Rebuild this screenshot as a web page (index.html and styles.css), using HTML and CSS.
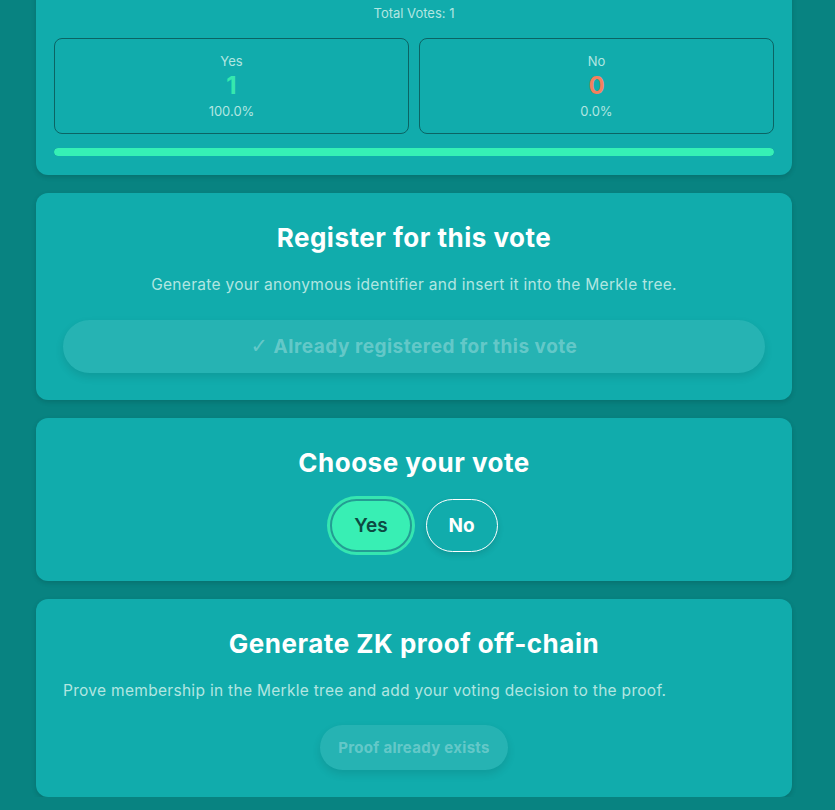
FILE: index.html
```html
<!DOCTYPE html>
<html lang="en">
<head>
<meta charset="utf-8">
<title>Vote</title>
<link rel="stylesheet" href="styles.css">
</head>
<body>
<main class="stack">
  <section class="card results">
    <p class="total">Total Votes: 1</p>
    <div class="stats">
      <div class="stat">
        <span class="stat-label">Yes</span>
        <span class="stat-num yes">1</span>
        <span class="stat-pct">100.0%</span>
      </div>
      <div class="stat">
        <span class="stat-label">No</span>
        <span class="stat-num no">0</span>
        <span class="stat-pct">0.0%</span>
      </div>
    </div>
    <div class="bar"><div class="bar-fill" style="width:100%"></div></div>
  </section>

  <section class="card center">
    <h2 class="title">Register for this vote</h2>
    <p class="desc">Generate your anonymous identifier and insert it into the Merkle tree.</p>
    <button class="btn-disabled wide" disabled><span class="check">✓</span> Already registered for this vote</button>
  </section>

  <section class="card center choose">
    <h2 class="title">Choose your vote</h2>
    <div class="choices">
      <button class="choice selected">Yes</button>
      <button class="choice">No</button>
    </div>
  </section>

  <section class="card">
    <h2 class="title centered">Generate ZK proof off-chain</h2>
    <p class="desc">Prove membership in the Merkle tree and add your voting decision to the proof.</p>
    <div class="btn-row">
      <button class="btn-disabled small" disabled>Proof already exists</button>
    </div>
  </section>
</main>
</body>
</html>
```

FILE: styles.css
```css
* { box-sizing: border-box; }

html, body {
  margin: 0;
  padding: 0;
  background: #088381;
  font-family: Inter, "Noto Sans", "Liberation Sans", sans-serif;
  color: #ffffff;
}

.stack {
  width: 756px;
  margin: -24px 0 0 36px;
  display: flex;
  flex-direction: column;
  gap: 18px;
}

.card {
  background: #11acac;
  border-radius: 12px;
  padding: 27px;
  box-shadow: 0 2px 5px rgba(0, 0, 0, 0.14);
}

.center { text-align: center; }

.results {
  padding: 28px 18px 19px;
}

.choose {
  padding-bottom: 29px;
}

.total {
  margin: 0 0 16px;
  text-align: center;
  font-size: 13px;
  line-height: 18px;
  color: #b2e6e1;
}

.stats {
  display: grid;
  grid-template-columns: 1fr 1fr;
  gap: 10px;
}

.stat {
  border: 1px solid #0b6464;
  border-radius: 8px;
  padding: 13px 0;
  display: flex;
  flex-direction: column;
  align-items: center;
}

.stat-label, .stat-pct {
  font-size: 13px;
  line-height: 18px;
  color: #b2e6e1;
}

.stat-num {
  font-size: 24px;
  font-weight: 700;
  line-height: 32px;
}
.stat-num.yes { color: #36e8ae; }
.stat-num.no { color: #f4805e; }

.bar {
  margin-top: 14px;
  height: 8px;
  border-radius: 4px;
  background: rgba(0, 0, 0, 0.15);
  overflow: hidden;
}
.bar-fill {
  height: 100%;
  background: #36f0b5;
  border-radius: 4px;
}

.title {
  margin: 0;
  font-size: 26px;
  line-height: 36px;
  font-weight: 700;
  letter-spacing: 0.5px;
  color: #ffffff;
}
.centered { text-align: center; }

.desc {
  margin: 18px 0 0;
  font-size: 15.5px;
  line-height: 22px;
  letter-spacing: 0.3px;
  color: #b2e6e1;
}

.btn-disabled {
  font-family: inherit;
  border: none;
  border-radius: 999px;
  background: rgba(255, 255, 255, 0.09);
  color: rgba(255, 255, 255, 0.3);
  font-weight: 700;
  box-shadow: 0 4px 8px rgba(0, 0, 0, 0.1);
  cursor: not-allowed;
}

.check {
  font-family: "DejaVu Sans", sans-serif;
  font-weight: 700;
  font-size: 1.1em;
  line-height: 1;
}

.wide {
  display: block;
  width: 100%;
  height: 53px;
  margin-top: 24px;
  font-size: 19px;
  letter-spacing: 0.5px;
}

.btn-row {
  display: flex;
  justify-content: center;
  margin-top: 23px;
}

.small {
  height: 45px;
  padding: 0 18px;
  font-size: 15px;
  letter-spacing: 0.3px;
}

.choices {
  display: flex;
  justify-content: center;
  gap: 14px;
  margin-top: 18px;
}

.choice {
  font-family: inherit;
  height: 53px;
  padding: 0 22px;
  border-radius: 999px;
  font-size: 19px;
  font-weight: 700;
  background: transparent;
  color: #ffffff;
  border: 1px solid #ffffff;
  box-shadow: 0 3px 6px rgba(0, 0, 0, 0.12);
}

.choice.selected {
  background: #38efb4;
  color: #0d4a42;
  border: 2px solid #239d93;
  font-weight: 600;
  box-shadow: 0 0 0 3px #35e6b0;
}
```
